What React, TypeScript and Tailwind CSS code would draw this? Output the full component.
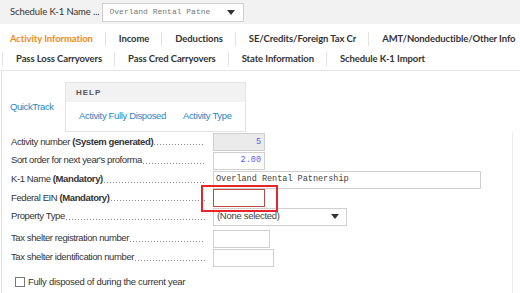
import React from 'react';

const tabFont = { fontFamily: 'Lato, "Open Sans", sans-serif' };
const sans = { fontFamily: '"Liberation Sans", Arial, sans-serif' };
const mono = { fontFamily: '"Liberation Mono", "Courier New", monospace' };

const Dots = () => (
    <div className="flex-1 h-[1px] self-end mb-[4px] ml-[1px] bg-[linear-gradient(to_right,#8a8a8a_1px,transparent_1px)] bg-[length:3px_1px]" />
);

const Row: React.FC<{ label: React.ReactNode; children: React.ReactNode; className?: string }> = ({ label, children, className }) => (
    <div className={`flex items-center ${className ?? ''}`}>
        <div className="w-[195px] flex items-center text-[9.5px] tracking-[-0.4px] text-[#333] pr-[1px]">
            <span className="whitespace-nowrap">{label}</span>
            <Dots />
        </div>
        <div className="ml-[7px] flex items-center">{children}</div>
    </div>
);

const App: React.FC = () => {
    const row1 = ['Activity Information', 'Income', 'Deductions', 'SE/Credits/Foreign Tax Cr', 'AMT/Nondeductible/Other Info'];
    const row2 = ['Pass Loss Carryovers', 'Pass Cred Carryovers', 'State Information', 'Schedule K-1 Import'];

    return (
        <div className="w-[520px] h-[293px] overflow-hidden bg-white" style={sans}>
            {/* Top bar */}
            <div className="h-[24px] bg-[#f2f2f2] flex items-center pl-[10px]">
                <span className="text-[9.5px] tracking-[-0.1px] text-[#333] whitespace-nowrap" style={tabFont}>Schedule K-1 Name ...</span>
                <div className="ml-[2px] w-[142px] h-[19px] bg-white border border-[#d0d0d0] flex items-center pl-[7px] pr-[8px]">
                    <span className="flex-1 overflow-hidden whitespace-nowrap text-[8px] text-[#777]" style={mono}>
                        Overland Rental Patne
                    </span>
                    <svg width="8" height="5" viewBox="0 0 8 5"><path d="M0 0h8L4 5z" fill="#333" /></svg>
                </div>
            </div>

            {/* Tabs */}
            <div className="pt-[5px]" style={tabFont}>
                <div className="flex items-center h-[20px] pl-[10px] whitespace-nowrap">
                    {row1.map((t, i) => (
                        <div key={t} className={`flex items-center ${i > 0 ? 'border-l border-[#e2e2e2] pl-[13px]' : ''} pr-[12px] h-[14px]`}>
                            <span className={`text-[9.5px] tracking-[-0.1px] font-bold ${i === 0 ? 'text-[#f08a24]' : 'text-[#333]'}`}>{t}</span>
                        </div>
                    ))}
                </div>
                <div className="flex items-center h-[20px] pl-[2px] whitespace-nowrap">
                    {row2.map(t => (
                        <div key={t} className="flex items-center border-l border-[#e2e2e2] pl-[13px] pr-[12px] h-[14px]">
                            <span className="text-[9.5px] tracking-[-0.1px] font-bold text-[#333]">{t}</span>
                        </div>
                    ))}
                </div>
            </div>
            <div className="h-[1px] bg-[#e6e6e6] mt-[1px]" />

            {/* Body */}
            <div className="ml-[1px] border-l border-[#e0e0e0]">
                {/* QuickTrack + Help */}
                <div className="flex items-center pt-[11px] pl-[8px]">
                    <span className="w-[43px] text-[9.5px] tracking-[-0.4px] text-[#2b86c5] whitespace-nowrap">QuickTrack</span>
                    <div className="ml-[12px] w-[181px] h-[50px] border border-[#e4e4e4]">
                        <div className="h-[19px] bg-[#f2f2f3] flex items-center pl-[10px]">
                            <span className="text-[8px] font-bold tracking-[1px] text-[#555]">HELP</span>
                        </div>
                        <div className="flex items-center pt-[7px] pl-[13px] text-[9.5px] tracking-[-0.35px] text-[#2b86c5] whitespace-nowrap">
                            <span>Activity Fully Disposed</span>
                            <span className="ml-[17px]">Activity Type</span>
                        </div>
                    </div>
                </div>

                {/* Form */}
                <div className="w-[511px] border-r border-[#ececec] pt-[1px] pl-[9px] h-[170px]">
                    <Row label={<>Activity number <b>(System generated)</b></>} className="h-[18px]">
                        <div className="w-[52px] h-[18px] bg-[#ebebeb] border border-[#cfcfcf] flex items-center justify-end pr-[3px] text-[8.5px] text-[#5b5bf0]" style={mono}>5</div>
                    </Row>
                    <Row label="Sort order for next year's proforma" className="h-[19px]">
                        <div className="w-[52px] h-[18px] bg-white border border-[#cfcfcf] flex items-center justify-end pr-[3px] text-[8.5px] text-[#5b5bf0]" style={mono}>2.00</div>
                    </Row>
                    <Row label={<>K-1 Name <b>(Mandatory)</b></>} className="h-[19px]">
                        <div className="w-[268px] h-[18px] bg-white border border-[#cfcfcf] flex items-center pl-[2px] text-[8.5px] text-[#444]" style={mono}>Overland Rental Patnership</div>
                    </Row>
                    <Row label={<>Federal EIN <b>(Mandatory)</b></>} className="h-[18px]">
                        <div className="relative w-[52px] h-[18px] bg-white border border-[#b94a48]">
                            <div className="absolute left-[-13px] top-[-5px] w-[77px] h-[27px] border-2 border-[#e8232a]" />
                        </div>
                    </Row>
                    <Row label="Property Type" className="h-[19px]">
                        <div className="w-[134px] h-[18px] bg-white border border-[#cfcfcf] flex items-center pl-[3px] pr-[7px] text-[9.5px] tracking-[-0.3px] text-[#444]">
                            <span className="flex-1">(None selected)</span>
                            <svg width="8" height="5" viewBox="0 0 8 5"><path d="M0 0h8L4 5z" fill="#333" /></svg>
                        </div>
                    </Row>
                    <Row label="Tax shelter registration number" className="h-[19px] mt-[3px]">
                        <div className="w-[57px] h-[18px] bg-white border border-[#cfcfcf]" />
                    </Row>
                    <Row label="Tax shelter identification number" className="h-[19px]">
                        <div className="w-[61px] h-[18px] bg-white border border-[#cfcfcf]" />
                    </Row>
                    <div className="flex items-center mt-[8px] pl-[4px]">
                        <div className="w-[10px] h-[10px] border border-[#777] bg-white" />
                        <span className="ml-[3px] text-[9.5px] tracking-[-0.3px] text-[#333]">Fully disposed of during the current year</span>
                    </div>
                </div>
            </div>
        </div>
    );
};

export default App;
